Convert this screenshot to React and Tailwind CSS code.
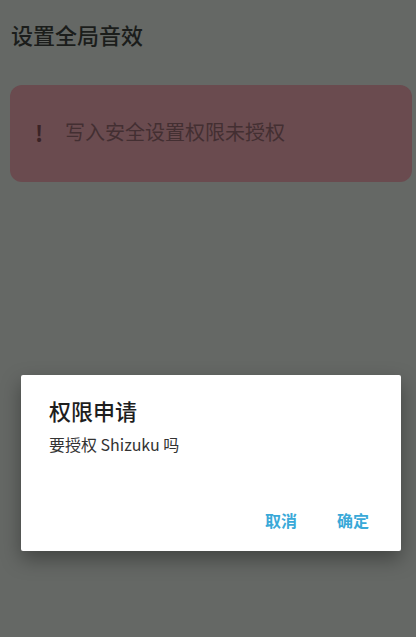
export default function App() {
	return (
		<div
			className="relative w-[416px] h-[637px] overflow-hidden bg-[#656865]"
			style={{ fontFamily: '"Noto Sans CJK SC", "Noto Sans", sans-serif' }}
		>
			<div className="px-[11px] pt-[19px]">
				<h1 className="text-[22px] leading-[30px] font-medium text-[#1b1d1b]">
					设置全局音效
				</h1>
				<div className="mt-[36px] -ml-px w-[402px] h-[97px] pb-[4px] rounded-[12px] bg-[#6a4b4f] flex items-center">
					<span className="ml-[25px] w-[8px] text-[22px] font-bold leading-none text-[#3a2326]">
						!
					</span>
					<span className="ml-[22px] text-[20px] leading-[28px] text-[#432f32]">
						写入安全设置权限未授权
					</span>
				</div>
			</div>

			{/* dialog */}
			<div className="absolute left-[21px] top-[375px] w-[380px] h-[176px] bg-white rounded-[2px] shadow-[0_8px_20px_rgba(0,0,0,0.35)]">
				<div className="pl-[28px] pt-[21px]">
					<div className="text-[22px] leading-[28px] font-medium text-[#1e1e1e]">
						权限申请
					</div>
					<div className="mt-[9px] text-[16px] leading-[22px] text-[#333333]">
						要授权 Shizuku 吗
					</div>
				</div>
				<div className="absolute right-[32px] bottom-[20px] flex gap-[40px] text-[16px] leading-[22px] font-bold text-[#3aa9d8]">
					<span>取消</span>
					<span>确定</span>
				</div>
			</div>
		</div>
	);
}
